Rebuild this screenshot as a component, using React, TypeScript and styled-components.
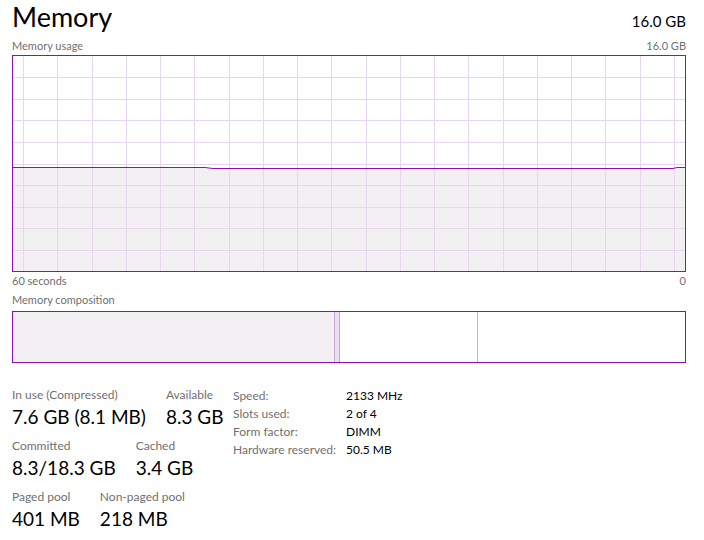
import React from 'react';
import styled, { createGlobalStyle } from 'styled-components';

const PURPLE = '#8b12ae';
const GRID = '#e8d6ee';
const FILL = '#f3f0f4';
const LABEL = '#707070';

const GlobalStyle = createGlobalStyle`
  body {
    margin: 0;
    background: #fff;
    font-family: 'Segoe UI', Lato, sans-serif;
    color: #000;
  }
`;

// memory usage history (chart coords), oldest first
const history = [
  { x: 0, y: 111.5 },
  { x: 192, y: 111.5 },
  { x: 200, y: 112.5 },
  { x: 660, y: 112.5 },
  { x: 664, y: 111.5 },
  { x: 672, y: 111.5 },
];

const composition = [
  { name: 'inuse', width: 321, fill: FILL, line: '#c9a6d6' },
  { name: 'modified', width: 4, fill: '#ecdff0', line: '#c9a6d6' },
  { name: 'standby', width: 137, fill: '#fff', line: '#c8b2d2' },
];

const stats = [
  [
    { label: 'In use (Compressed)', value: '7.6 GB (8.1 MB)' },
    { label: 'Available', value: '8.3 GB' },
  ],
  [
    { label: 'Committed', value: '8.3/18.3 GB' },
    { label: 'Cached', value: '3.4 GB' },
  ],
  [
    { label: 'Paged pool', value: '401 MB' },
    { label: 'Non-paged pool', value: '218 MB' },
  ],
];

const specs = [
  ['Speed:', '2133 MHz'],
  ['Slots used:', '2 of 4'],
  ['Form factor:', 'DIMM'],
  ['Hardware reserved:', '50.5 MB'],
];

function UsageChart() {
  const w = 672;
  const h = 215;
  const cols = Array.from({ length: 20 }, (_, i) => Math.round(10 + i * 34.263) + 0.5);
  const rows = Array.from({ length: 9 }, (_, i) => Math.floor(21.6 * (i + 1)) + 0.5);
  const line = history.map((p, i) => `${i ? 'L' : 'M'}${p.x} ${p.y}`).join(' ');
  return (
    <svg width={w} height={h} style={{ display: 'block' }}>
      <path d={`${line} L${w} ${h} L0 ${h} Z`} fill={FILL} />
      {cols.map((x) => (
        <line key={'c' + x} x1={x} x2={x} y1={0} y2={h} stroke={GRID} strokeWidth={1} />
      ))}
      {rows.map((y) => (
        <line key={'r' + y} x1={0} x2={w} y1={y} y2={y} stroke={GRID} strokeWidth={1} />
      ))}
      <path d={line} fill="none" stroke={PURPLE} strokeWidth={1} />
    </svg>
  );
}

export default function App() {
  return (
    <Page>
      <GlobalStyle />
      <Header>
        <Title>Memory</Title>
        <Total>16.0 GB</Total>
      </Header>
      <CaptionRow $top={5}>
        <Caption>Memory usage</Caption>
        <Caption>16.0 GB</Caption>
      </CaptionRow>
      <ChartBox>
        <UsageChart />
      </ChartBox>
      <CaptionRow $top={2}>
        <Caption>60 seconds</Caption>
        <Caption>0</Caption>
      </CaptionRow>
      <CaptionRow $top={5}>
        <Caption>Memory composition</Caption>
      </CaptionRow>
      <CompositionBar>
        {composition.map((s) => (
          <Segment key={s.name} $width={s.width} $fill={s.fill} $line={s.line} />
        ))}
      </CompositionBar>
      <Details>
        <StatColumn>
          {stats.map((row, i) => (
            <StatRow key={i}>
              {row.map((s) => (
                <Stat key={s.label}>
                  <StatLabel>{s.label}</StatLabel>
                  <StatValue>{s.value}</StatValue>
                </Stat>
              ))}
            </StatRow>
          ))}
        </StatColumn>
        <SpecGrid>
          {specs.map(([k, v]) => (
            <React.Fragment key={k}>
              <SpecLabel>{k}</SpecLabel>
              <SpecValue>{v}</SpecValue>
            </React.Fragment>
          ))}
        </SpecGrid>
      </Details>
    </Page>
  );
}

const Page = styled.div`
  width: 674px;
  margin-left: 12px;
`;

const Header = styled.div`
  display: flex;
  justify-content: space-between;
  align-items: baseline;
`;

const Title = styled.div`
  font-size: 27px;
  line-height: 34px;
`;

const Total = styled.div`
  font-size: 15px;
`;

const CaptionRow = styled.div<{ $top: number }>`
  display: flex;
  justify-content: space-between;
  margin-top: ${(p) => p.$top}px;
`;

const Caption = styled.div`
  font-size: 11px;
  line-height: 14px;
  color: ${LABEL};
`;

const ChartBox = styled.div`
  margin-top: 2px;
  border: 1px solid ${PURPLE};
  width: 672px;
  height: 215px;
`;

const CompositionBar = styled.div`
  margin-top: 4px;
  border: 1px solid ${PURPLE};
  height: 50px;
  display: flex;
`;

const Segment = styled.div<{ $width: number; $fill: string; $line: string }>`
  width: ${(p) => p.$width}px;
  background: ${(p) => p.$fill};
  border-right: 1px solid ${(p) => p.$line};
`;

const Details = styled.div`
  display: flex;
  gap: 12px;
  margin-top: 24px;
`;

const StatColumn = styled.div`
  flex: 0 0 209px;
  min-width: 0;
  display: flex;
  flex-direction: column;
  gap: 8px;
`;

const StatRow = styled.div`
  display: flex;
  gap: 20px;
`;

const Stat = styled.div`
  display: flex;
  flex-direction: column;
  gap: 2px;
`;

const StatLabel = styled.div`
  font-size: 12px;
  line-height: 15px;
  color: ${LABEL};
  white-space: nowrap;
`;

const StatValue = styled.div`
  font-size: 19px;
  line-height: 26px;
  white-space: nowrap;
`;

const SpecGrid = styled.div`
  display: grid;
  grid-template-columns: 113px auto;
  grid-auto-rows: 18px;
  font-size: 12px;
  line-height: 18px;
`;

const SpecLabel = styled.div`
  color: ${LABEL};
`;

const SpecValue = styled.div`
  color: #000;
`;
